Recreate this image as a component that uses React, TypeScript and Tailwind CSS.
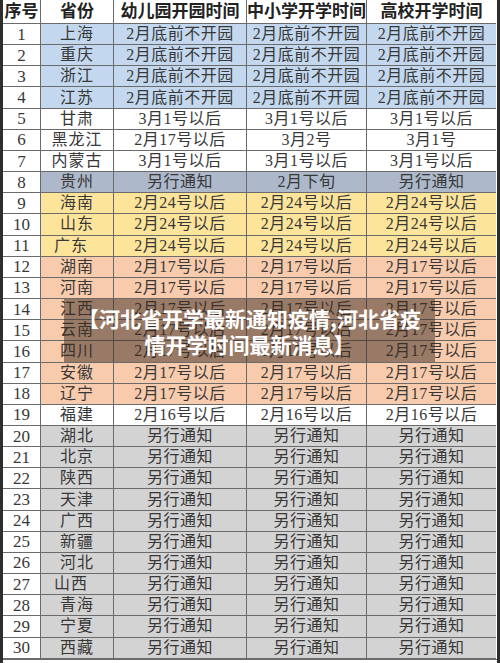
import React from "react";

type Row = { no: number; prov: string; k: string; m: string; u: string; tone: string; shift?: boolean };

const TONE: Record<string, string> = {
  blue: "bg-[#c3d8ee]",
  slate: "bg-[#adb9ca]",
  yellow: "bg-[#fde49b]",
  peach: "bg-[#f8cbad]",
  gray: "bg-[#d3d3d3]",
  white: "bg-white",
};

const same = (prov: string, v: string, tone: string, shift?: boolean) => ({ prov, k: v, m: v, u: v, tone, shift });

const DATA: Omit<Row, "no">[] = [
  same("上海", "2月底前不开园", "blue"),
  same("重庆", "2月底前不开园", "blue"),
  same("浙江", "2月底前不开园", "blue"),
  same("江苏", "2月底前不开园", "blue"),
  same("甘肃", "3月1号以后", "white"),
  { prov: "黑龙江", k: "2月17号以后", m: "3月2号", u: "3月1号", tone: "white" },
  same("内蒙古", "3月1号以后", "white"),
  { prov: "贵州", k: "另行通知", m: "2月下旬", u: "另行通知", tone: "slate" },
  same("海南", "2月24号以后", "yellow"),
  same("山东", "2月24号以后", "yellow"),
  same("广东", "2月24号以后", "yellow", true),
  same("湖南", "2月17号以后", "peach"),
  same("河南", "2月17号以后", "peach"),
  same("江西", "2月17号以后", "peach"),
  same("云南", "2月17号以后", "peach"),
  same("四川", "2月17号以后", "peach"),
  same("安徽", "2月17号以后", "peach"),
  same("辽宁", "2月17号以后", "peach"),
  same("福建", "2月16号以后", "white"),
  same("湖北", "另行通知", "gray"),
  same("北京", "另行通知", "gray"),
  same("陕西", "另行通知", "gray"),
  same("天津", "另行通知", "gray"),
  same("广西", "另行通知", "gray"),
  same("新疆", "另行通知", "gray"),
  same("河北", "另行通知", "gray"),
  same("山西", "另行通知", "gray", true),
  same("青海", "另行通知", "gray"),
  same("宁夏", "另行通知", "gray"),
  same("西藏", "另行通知", "gray"),
];

const ROWS: Row[] = DATA.map((r, i) => ({ ...r, no: i + 1 }));

const cell = "flex items-center justify-center border-r border-b border-[#6b6b6b] leading-none";

export default function App() {
  return (
    <div
      className="relative w-[500px] h-[663px] overflow-hidden bg-white border-x-[3px] border-[#2e2e2e] text-[#383838]"
      style={{ fontFamily: '"Liberation Serif", "Noto Sans CJK SC", serif' }}
    >
      <div className="grid grid-cols-[38px_73px_133px_120px_129px] border-b border-[#6b6b6b]">
        <div className={`${cell} h-[24px] text-[17px] font-bold text-[#222]`}>序号</div>
        <div className={`${cell} h-[24px] text-[17px] font-bold text-[#222]`}>省份</div>
        <div className={`${cell} h-[24px] text-[17px] font-bold text-[#222]`}>幼儿园开园时间</div>
        <div className={`${cell} h-[24px] text-[17px] font-bold text-[#222]`}>中小学开学时间</div>
        <div className={`${cell} h-[24px] text-[17px] font-bold text-[#222] border-r-0`}>高校开学时间</div>
        {ROWS.map((r) => (
          <React.Fragment key={r.no}>
            <div className={`${cell} h-[21.17px] text-[17px] bg-white`}>{r.no}</div>
            <div className={`${cell} h-[21.17px] text-[16px] tracking-[1px] ${TONE[r.tone]} ${r.shift ? "pr-[12px]" : ""}`}>{r.prov}</div>
            <div className={`${cell} h-[21.17px] text-[16px] tracking-[0.5px] ${TONE[r.tone]}`}>{r.k}</div>
            <div className={`${cell} h-[21.17px] text-[16px] tracking-[0.5px] ${TONE[r.tone]}`}>{r.m}</div>
            <div className={`${cell} h-[21.17px] text-[16px] tracking-[0.5px] border-r-0 ${TONE[r.tone]}`}>{r.u}</div>
          </React.Fragment>
        ))}
      </div>

      <div
        className="absolute left-[61px] top-[299px] w-[371px] h-[63px] bg-[#3a2a20]/50 flex flex-col items-center justify-center text-white font-bold text-[21px] leading-[26px] text-center"
        style={{ fontFamily: '"Noto Sans CJK SC", "Noto Sans", sans-serif' }}
      >
        <span>【河北省开学最新通知疫情,河北省疫</span>
        <span>情开学时间最新消息】</span>
      </div>
    </div>
  );
}
